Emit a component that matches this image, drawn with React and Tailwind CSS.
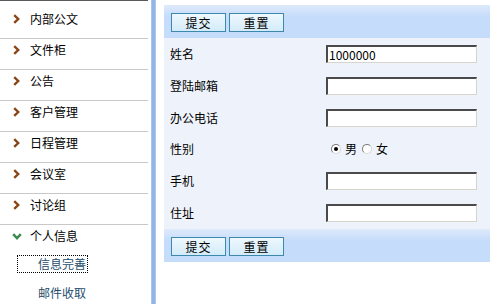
import React from "react";

const font = { fontFamily: '"Noto Sans CJK SC", "Noto Sans", sans-serif' };

function Chevron() {
  return (
    <svg width="7" height="10" viewBox="0 0 7 10" className="shrink-0">
      <polyline points="1.2,1.2 5.2,5 1.2,8.8" fill="none" stroke="#8a4516" strokeWidth="2.4" strokeLinejoin="miter" />
    </svg>
  );
}

function ChevronDown() {
  return (
    <svg width="10" height="7" viewBox="0 0 10 7" className="shrink-0">
      <polyline points="1.2,1.2 5,5.2 8.8,1.2" fill="none" stroke="#3b8a4e" strokeWidth="2.4" strokeLinejoin="miter" />
    </svg>
  );
}

function Btn({ children }) {
  return (
    <button className="w-[55px] h-[19px] border border-[#3d88ad] bg-linear-to-b from-[#eef8fe] to-[#d3ebf9] text-[12px] leading-[17px] text-black text-center tracking-[1px]">
      {children}
    </button>
  );
}

function Toolbar() {
  return (
    <div className="h-[33px] flex items-start gap-[3px] pl-[7px] pt-[8px] bg-linear-to-b from-[#dfeafb] from-0% to-[#c5dcfa] to-35%">
      <Btn>提交</Btn>
      <Btn>重置</Btn>
    </div>
  );
}

function Input({ value }) {
  return (
    <div className="w-[151px] h-[18px] bg-white border-t-2 border-l-2 border-b border-r border-t-[#4a4a4a] border-l-[#4a4a4a] border-b-[#d8d4cc] border-r-[#d8d4cc] text-[12px] leading-[15px] pl-[1px] text-black overflow-hidden">
      {value}
    </div>
  );
}

function Radio({ checked }) {
  return (
    <span className="w-[10px] h-[10px] rounded-full bg-white border border-t-[#7a7a7a] border-l-[#7a7a7a] border-b-[#d6d6d6] border-r-[#d6d6d6] flex items-center justify-center">
      {checked && <span className="w-[4px] h-[4px] rounded-full bg-black" />}
    </span>
  );
}

const navItems = ["内部公文", "文件柜", "公告", "客户管理", "日程管理", "会议室", "讨论组"];

export default function App() {
  const rows = [
    { label: "姓名", h: "h-[32px]", content: <Input value="1000000" /> },
    { label: "登陆邮箱", h: "h-[32px]", content: <Input value="" /> },
    { label: "办公电话", h: "h-[31px]", content: <Input value="" /> },
    {
      label: "性别",
      h: "h-[32px]",
      content: (
        <div className="flex items-center pl-[5px] text-[12px] leading-[14px] text-black">
          <Radio checked />
          <span className="ml-[4px]">男</span>
          <span className="ml-[5px]"><Radio /></span>
          <span className="ml-[4px]">女</span>
        </div>
      ),
    },
    { label: "手机", h: "h-[32px]", content: <Input value="" /> },
    { label: "住址", h: "h-[32px]", content: <Input value="" /> },
  ];

  return (
    <div className="w-[490px] h-[304px] flex bg-white overflow-hidden" style={font}>
      {/* Sidebar */}
      <div className="w-[150px] shrink-0 flex flex-col">
        <div className="w-[148px] border-t border-[#5a5a5a] pt-[7px]">
          {navItems.map((t) => (
            <div key={t} className="h-[31px] border-b border-[#c8c8c8] flex items-start pt-[4px] pl-[13px]">
              <div className="h-[14px] flex items-center">
                <Chevron />
              </div>
              <span className="ml-[10px] text-[12px] leading-[14px] text-black">{t}</span>
            </div>
          ))}
          <div className="h-[30px] flex items-start pt-[4px] pl-[12px]">
            <div className="h-[14px] flex items-center">
              <ChevronDown />
            </div>
            <span className="ml-[8px] text-[12px] leading-[14px] text-black">个人信息</span>
          </div>
          <div className="h-[30px] flex items-start pt-[1px] pl-[18px]">
            <span className="block outline-1 outline-dotted outline-black pl-[20px] pr-[1px] py-[1px] text-[12px] leading-[14px] text-[#1f4d6c]">
              信息完善
            </span>
          </div>
          <div className="h-[20px] flex items-start pt-[1px] pl-[38px]">
            <span className="block text-[12px] leading-[14px] text-[#1f4d6c]">邮件收取</span>
          </div>
        </div>
      </div>

      {/* blue splitter */}
      <div className="ml-[1px] w-[5px] shrink-0 bg-[#93b5e3] border-x border-[#a9c6ee]" />

      {/* Main */}
      <div className="flex-1 pl-[8px] pt-[5px]">
        <Toolbar />
        <div className="bg-[#eef3fb]">
          {rows.map((r) => (
            <div key={r.label} className={`${r.h} flex items-center`}>
              <div className="w-[162px] pl-[6px] text-[12px] leading-[14px] text-black">{r.label}</div>
              {r.content}
            </div>
          ))}
        </div>
        <Toolbar />
      </div>
    </div>
  );
}
